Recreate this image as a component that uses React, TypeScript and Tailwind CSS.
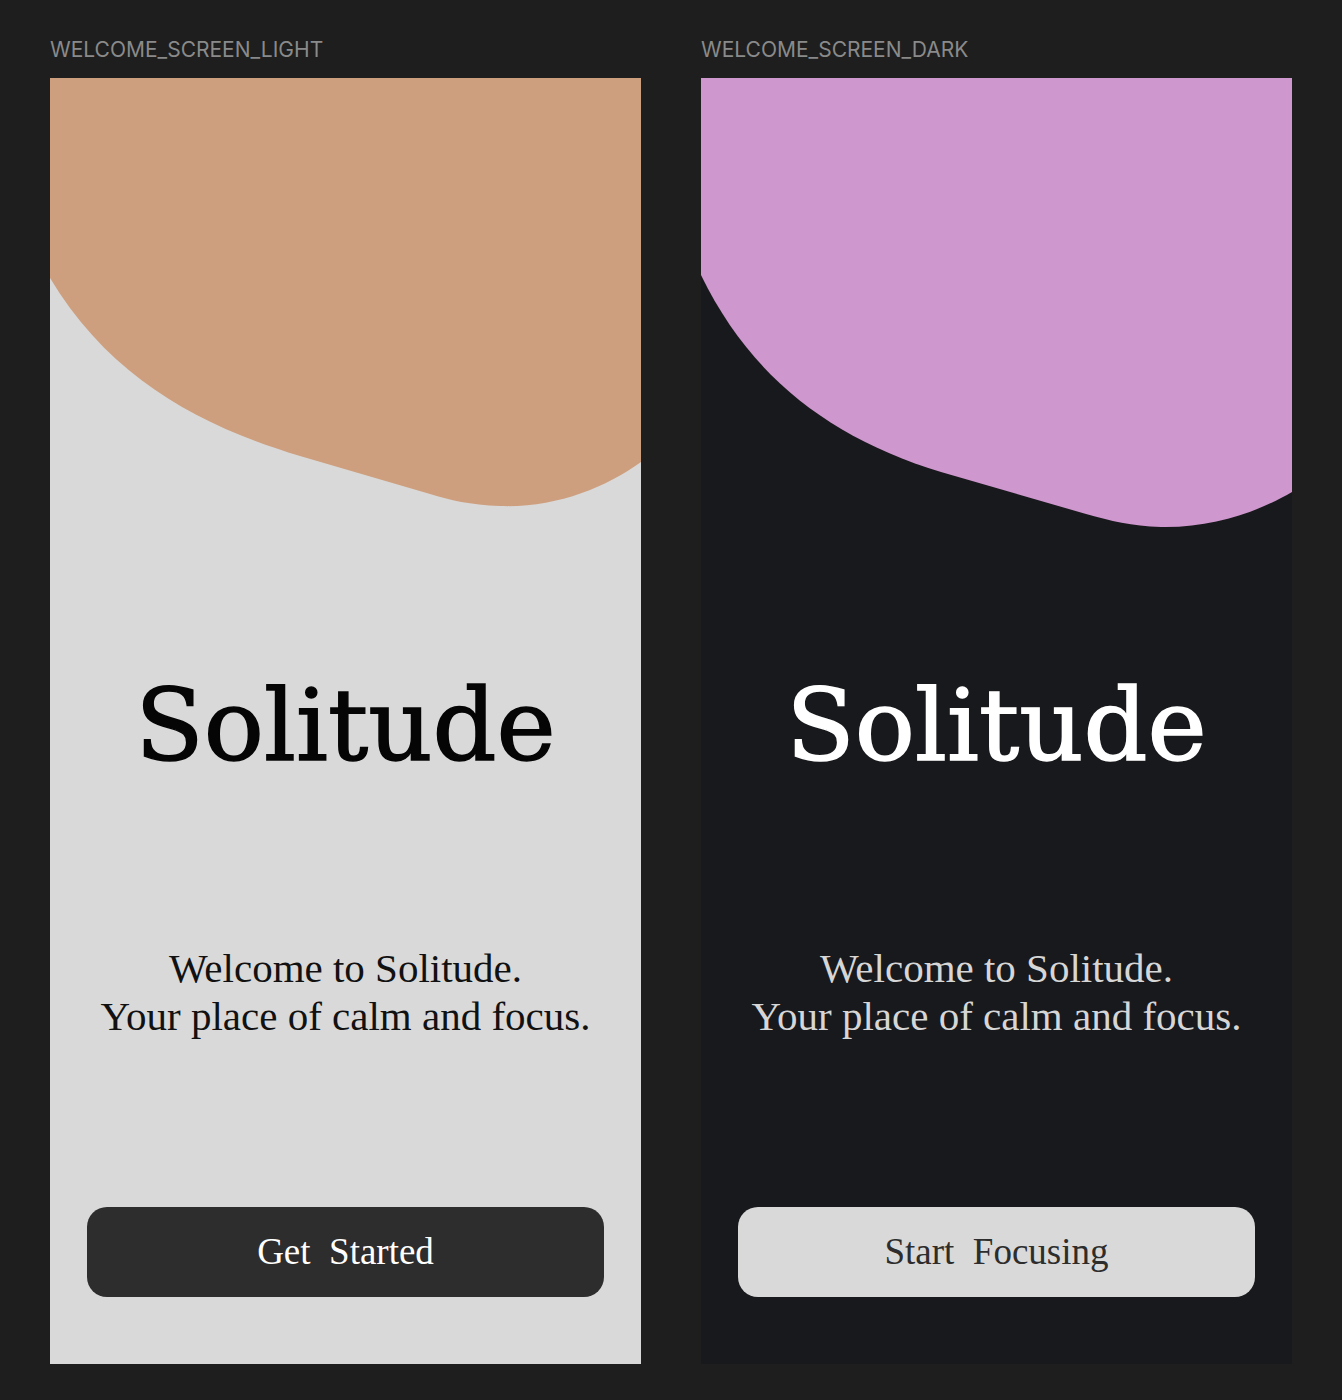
import React from 'react';

interface ScreenTheme {
  label: string;
  frameBg: string;
  blobFill: string;
  blobPath: string;
  titleColor: string;
  bodyColor: string;
  buttonClasses: string;
  buttonText: string;
}

const screens: ScreenTheme[] = [
  {
    label: 'WELCOME_SCREEN_LIGHT',
    frameBg: 'bg-[#d9d9d9]',
    blobFill: '#cd9f7e',
    blobPath:
      'M0 0 H591 V384 C555 410 505 430 450 428 C420 427 400 422 380 416 L250 378 C150 348 60 300 0 200 Z',
    titleColor: 'text-[#050505]',
    bodyColor: 'text-[#111111]',
    buttonClasses: 'bg-[#2d2d2d] text-white',
    buttonText: 'Get  Started',
  },
  {
    label: 'WELCOME_SCREEN_DARK',
    frameBg: 'bg-[#18191d]',
    blobFill: '#ce97cd',
    blobPath:
      'M0 0 H591 V414 C560 432 515 450 460 449 C430 448 410 443 385 436 L240 394 C130 360 50 300 0 197 Z',
    titleColor: 'text-white',
    bodyColor: 'text-[#d6d6d6]',
    buttonClasses: 'bg-[#d9d9d9] text-[#2d2d2d]',
    buttonText: 'Start  Focusing',
  },
];

const WelcomeScreen: React.FC<{ theme: ScreenTheme }> = ({ theme }) => {
  return (
    <div className="flex flex-col">
      <div className="h-[28px] leading-[28px] text-[21px] text-[#8a8a8a] font-['Inter',sans-serif]">
        {theme.label}
      </div>

      <div className={`mt-[14px] w-[591px] h-[1286px] flex flex-col items-center overflow-hidden ${theme.frameBg}`}>
        {/* Decorative blob across the top */}
        <svg width="591" height="460" viewBox="0 0 591 460" className="block shrink-0">
          <path d={theme.blobPath} fill={theme.blobFill} />
        </svg>

        <h1
          className={`mt-[138px] text-[100px] leading-none font-normal [-webkit-text-stroke-width:1.5px] font-['DejaVu_Serif',serif] ${theme.titleColor}`}
        >
          Solitude
        </h1>

        <p
          className={`mt-[168px] text-center text-[41px] leading-[48px] font-['Liberation_Serif',serif] ${theme.bodyColor}`}
        >
          Welcome to Solitude.
          <br />
          Your place of calm and focus.
        </p>

        <button
          className={`mt-auto mb-[67px] w-[517px] h-[90px] rounded-[20px] text-[37px] whitespace-pre font-['Liberation_Serif',serif] ${theme.buttonClasses}`}
        >
          {theme.buttonText}
        </button>
      </div>
    </div>
  );
};

const App: React.FC = () => {
  return (
    <div className="min-h-[1400px] bg-[#1e1e1e] px-[50px] pt-[36px]">
      <div className="flex gap-[60px]">
        {screens.map((s) => (
          <WelcomeScreen key={s.label} theme={s} />
        ))}
      </div>
    </div>
  );
};

export default App;
